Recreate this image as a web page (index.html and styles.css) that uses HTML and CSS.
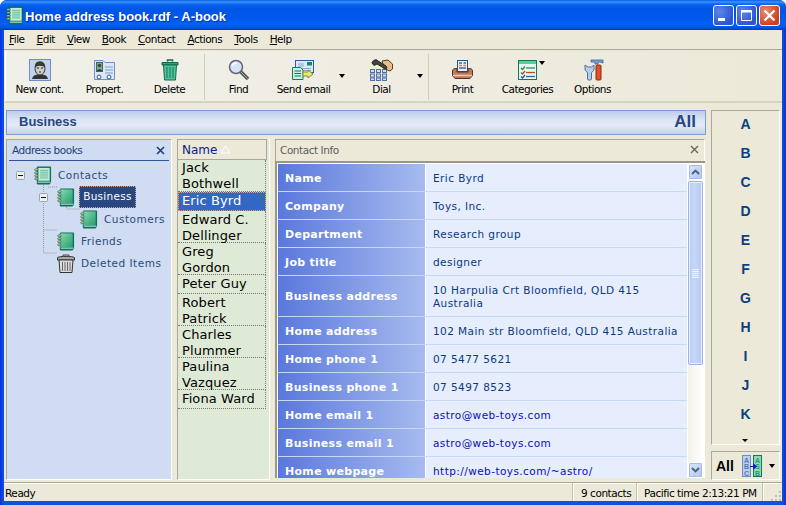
FILE: index.html
```html
<!DOCTYPE html>
<html lang="en">
<head>
<meta charset="utf-8">
<title>Home address book.rdf - A-book</title>
<link rel="stylesheet" href="styles.css">
</head>
<body>
<svg class="defs" width="0" height="0" aria-hidden="true">
  <defs>
    <linearGradient id="gb" x1="0" y1="0" x2="1" y2="1"><stop offset="0" stop-color="#8fd8b4"/><stop offset=".55" stop-color="#4fb98c"/><stop offset="1" stop-color="#2c9a70"/></linearGradient>
    <symbol id="book" viewBox="0 0 19 19">
      <path d="M3.5 .5H17.5V15.5L16.5 18.5H3.5Z" fill="#0b7c60" stroke="#0a6a52"/>
      <rect x="3.5" y="1" width="13" height="14.5" fill="url(#gb)"/>
      <path d="M4 16.5H17" stroke="#d8efe4"/>
      <g fill="#e8e48a" stroke="#14584a" stroke-width=".7"><rect x=".8" y="2.5" width="3.6" height="1.8" rx=".8"/><rect x=".8" y="5.7" width="3.6" height="1.8" rx=".8"/><rect x=".8" y="8.9" width="3.6" height="1.8" rx=".8"/><rect x=".8" y="12.1" width="3.6" height="1.8" rx=".8"/></g>
    </symbol>
    <symbol id="bookp" viewBox="0 0 19 19">
      <path d="M3.5 .5H17.5V15.5L16.5 18.5H3.5Z" fill="#0b7c60" stroke="#0a6a52"/>
      <rect x="4.5" y="1.5" width="12" height="13.5" fill="#c5ecd8"/>
      <path d="M6.5 4H15M6.5 6H15M6.5 8H15M6.5 10H15M6.5 12H15" stroke="#5fb896"/>
      <path d="M4 16.5H17" stroke="#d8efe4"/>
      <g fill="#e8e48a" stroke="#14584a" stroke-width=".7"><rect x=".8" y="2.5" width="3.6" height="1.8" rx=".8"/><rect x=".8" y="5.7" width="3.6" height="1.8" rx=".8"/><rect x=".8" y="8.9" width="3.6" height="1.8" rx=".8"/><rect x=".8" y="12.1" width="3.6" height="1.8" rx=".8"/></g>
    </symbol>
    <symbol id="minus" viewBox="0 0 9 9">
      <rect x=".5" y=".5" width="8" height="8" rx="1" fill="#f1efe4" stroke="#8fa4bd"/>
      <path d="M2 4.5H7" stroke="#111"/>
    </symbol>
    <symbol id="chev" viewBox="0 0 9 6">
      <path d="M1 5L4.5 1.6L8 5" fill="none" stroke="#4d6185" stroke-width="2"/>
    </symbol>
  </defs>
</svg>
<div class="window">
  <header class="titlebar">
    <svg class="title-icon" width="18" height="19"><use href="#bookp"/></svg>
    <span class="title-text">Home address book.rdf - A-book</span>
    <div class="winbtns">
      <span class="winbtn"><svg width="21" height="21" viewBox="0 0 21 21"><rect x="5" y="13" width="7" height="3" fill="#fff"/></svg></span>
      <span class="winbtn"><svg width="21" height="21" viewBox="0 0 21 21"><path d="M5.5 5.5H15.5V15.5H5.5Z" fill="none" stroke="#fff"/><path d="M5 6.5H16" stroke="#fff" stroke-width="2"/></svg></span>
      <span class="winbtn close"><svg width="21" height="21" viewBox="0 0 21 21"><path d="M5.5 5.5L15.5 15.5M15.5 5.5L5.5 15.5" stroke="#fff" stroke-width="2.2"/></svg></span>
    </div>
  </header>
  <div class="frame">
    <nav class="menu">
      <span><u>F</u>ile</span><span><u>E</u>dit</span><span><u>V</u>iew</span><span><u>B</u>ook</span><span><u>C</u>ontact</span><span><u>A</u>ctions</span><span><u>T</u>ools</span><span><u>H</u>elp</span>
    </nav>
    <div class="toolbar">
      <div class="tool">
        <svg width="22" height="22" viewBox="0 0 22 22"><rect x=".5" y=".5" width="21" height="21" fill="#c3d3ee" stroke="#6f8fc4"/><path d="M3 20C4 16 7 15.5 11 15.5S18 16 19 20Z" fill="#333"/><ellipse cx="11" cy="9.5" rx="5" ry="6.5" fill="#cfcfc8" stroke="#333"/><path d="M6 9C5.5 3.5 8 2.5 11 2.5S16.5 4 16 9C14.5 6.5 8 5.5 6 9Z" fill="#3a3a3a"/><path d="M8 9H10M12 9H14M10 13H12" stroke="#222"/></svg>
        <span>New cont.</span>
      </div>
      <div class="tool">
        <svg width="24" height="22" viewBox="0 0 24 22"><path d="M1.5 1.5H10L12 3.5H21.5V20.5H1.5Z" fill="#dde8f6" stroke="#6f92c6"/><rect x="3.5" y="3.5" width="6" height="9" fill="#7fae90" stroke="#3a6a58"/><circle cx="6.5" cy="6.5" r="1.8" fill="#444"/><path d="M4 12C4.5 9.5 8.5 9.5 9 12Z" fill="#333"/><path d="M12 8H20M12 11H20M12 14H20" stroke="#7d9dd0"/><circle cx="6" cy="18" r="2" fill="#fff" stroke="#2e5da8"/><circle cx="16" cy="18" r="2" fill="#fff" stroke="#2e5da8"/></svg>
        <span>Propert.</span>
      </div>
      <div class="tool">
        <svg width="18" height="22" viewBox="0 0 18 22"><path d="M6.5 2.500V1H11.5V2.500" fill="none" stroke="#0c6d55" stroke-width="1.500"/><path d="M1 3.500H17V6H1Z" fill="#2fa37a" stroke="#0d6b53"/><path d="M2.500 6H15.500L14.500 21H3.500Z" fill="#53c197" stroke="#0d6b53"/><path d="M6 8V19M9 8V19M12 8V19" stroke="#0f7d60"/></svg>
        <span>Delete</span>
      </div>
      <i class="tsep"></i>
      <div class="tool">
        <svg width="22" height="22" viewBox="0 0 22 22"><path d="M12 12L20 20" stroke="#555" stroke-width="3.500"/><path d="M13 13L19.500 19.500" stroke="#aaa" stroke-width="1"/><circle cx="8" cy="8" r="6.500" fill="#d5e4f8" stroke="#667" stroke-width="1.500"/><path d="M4 7C5 4.500 7 4 9 4" fill="none" stroke="#fff" stroke-width="1.500"/></svg>
        <span>Find</span>
      </div>
      <div class="tool tool-send">
        <svg width="23" height="20" viewBox="0 0 23 20"><rect x="3.500" y=".5" width="18" height="12" fill="#dce8f8" stroke="#2f5b9e"/><rect x="15" y="2" width="5" height="3.500" fill="#0f8a68"/><path d="M6 4H12M6 6H12M9 8.500H19M9 10.500H19" stroke="#8aa6d4"/><path d="M.5 7.500H8.500L11 10V19.500H.5Z" fill="#cdeee0" stroke="#0f7d60"/><path d="M2.500 11H9M2.500 13.500H9M2.500 16H9" stroke="#0f7d60"/><path d="M11 12H16V10L21 14L16 18V16H11Z" fill="#f0ea6a" stroke="#7f8f3a"/></svg>
        <span>Send email</span>
        <b class="drop"></b>
      </div>
      <div class="tool tool-dial">
        <svg width="23" height="22" viewBox="0 0 23 22"><g fill="#d2deef" stroke="#4f6fa8"><rect x=".5" y="10.500" width="4" height="3"/><rect x="6.500" y="10.500" width="4" height="3"/><rect x="12.500" y="10.500" width="4" height="3"/><rect x=".5" y="15" width="4" height="3"/><rect x="6.500" y="15" width="4" height="3"/><rect x="12.500" y="15" width="4" height="3"/><rect x=".5" y="19" width="4" height="2.500"/><rect x="6.500" y="19" width="4" height="2.500"/><rect x="12.500" y="19" width="4" height="2.500"/></g><path d="M12 2L18 1L22.500 5V10L20 12L15 10Z" fill="#e8bd8a" stroke="#5a3a20"/><path d="M2 4C3 .5 7 0 8 2L16 7L17 9C15 11 13 9 12 8L7 5L4 6.500Z" fill="#444" stroke="#222"/></svg>
        <span>Dial</span>
        <b class="drop"></b>
      </div>
      <i class="tsep"></i>
      <div class="tool">
        <svg width="21" height="20" viewBox="0 0 21 20"><rect x="5.500" y=".5" width="10" height="11" fill="#e8f0fa" stroke="#2f4f8a"/><path d="M7 3H10M11.500 3H14" stroke="#0f8a68" stroke-width="1.500"/><path d="M7 5.500H10M11.500 5.500H14" stroke="#d8882a" stroke-width="1.500"/><path d="M7 8H14" stroke="#3a6ac0" stroke-width="1.500"/><path d="M.5 11C.5 9 2 8.500 5 8.500V12H16V8.500C19 8.500 20.500 9 20.500 11V15.500L18 18.500H3L.5 15.500Z" fill="#b97a5c" stroke="#5a3326"/><path d="M1 15.500H20" stroke="#e8c8b4" stroke-width="1.500"/></svg>
        <span>Print</span>
      </div>
      <div class="tool">
        <svg width="19" height="20" viewBox="0 0 19 20"><rect x=".5" y=".5" width="18" height="19" fill="#e9f7f0" stroke="#0d7a60"/><rect x="1" y="1" width="17" height="3" fill="#55d09c"/><path d="M3 8L4.500 9.500L7 6.500" fill="none" stroke="#1f8f3f" stroke-width="1.300"/><path d="M3 12.500L4.500 14L7 11" fill="none" stroke="#c04020" stroke-width="1.300"/><path d="M3 16.500L4.500 18L7 15" fill="none" stroke="#2050b0" stroke-width="1.300"/><path d="M8 8H17" stroke="#2a9060" stroke-width="1.300"/><path d="M8 12.500H17" stroke="#c04830" stroke-width="1.300"/><path d="M8 16.500H17" stroke="#3a60b0" stroke-width="1.300"/></svg>
        <span>Categories</span>
        <b class="drop drop-top"></b>
      </div>
      <div class="tool">
        <svg width="22" height="22" viewBox="0 0 22 22"><path d="M9 1H21V4L18 3H16V5H13V3H9Z" fill="#7fa8d8" stroke="#2f5b9e" stroke-width=".8"/><rect x="14" y="6" width="5" height="15" rx="1" fill="#e2502a" stroke="#8a2a10"/><path d="M3 6V10C3 12 5 13 5.500 13.500V20C5.500 21.500 9.500 21.500 9.500 20V13.500C10 13 12 12 12 10V6L9.500 8H6Z" fill="#b5cdea" stroke="#4a70a8"/></svg>
        <span>Options</span>
      </div>
    </div>
    <div class="main">
      <div class="workspace">
        <div class="banner"><span>Business</span><span class="banner-all">All</span></div>
        <div class="panes">
          <aside class="books">
            <div class="books-head"><span>Address books</span><svg width="9" height="9" viewBox="0 0 9 9"><path d="M1 1L8 8M8 1L1 8" stroke="#1f3f78" stroke-width="1.600"/></svg></div>
            <div class="tree">
              <svg class="tree-lines" width="100" height="120"><path d="M43.500 16V92M43.500 69H57M43.500 92H57M48 26H57M66.500 36V48H80" fill="none" stroke="#999" stroke-dasharray="1 1"/></svg>
              <div class="node n0"><svg class="exp" width="9" height="9"><use href="#minus"/></svg><svg class="bk" width="18" height="19"><use href="#bookp"/></svg><span>Contacts</span></div>
              <div class="node n1"><svg class="exp" width="9" height="9"><use href="#minus"/></svg><svg class="bk" width="18" height="19"><use href="#book"/></svg><span class="sel">Business</span></div>
              <div class="node n2"><svg class="bk" width="18" height="19"><use href="#book"/></svg><span>Customers</span></div>
              <div class="node n3"><svg class="bk" width="18" height="19"><use href="#book"/></svg><span>Friends</span></div>
              <div class="node n3"><svg class="bk" width="18" height="19" viewBox="0 0 18 19"><path d="M6 2.500V1H12V2.500" fill="none" stroke="#444"/><path d="M.5 3.500C3 2 15 2 17.500 3.500V6H.5Z" fill="#aaa" stroke="#333"/><path d="M2 6H16L15 18.500H3Z" fill="#ddd" stroke="#333"/><path d="M5.500 8V17M8 8V17M10.500 8V17M13 8V17" stroke="#666"/></svg><span>Deleted Items</span></div>
            </div>
          </aside>
          <section class="names">
            <div class="names-head">Name <svg width="11" height="9" viewBox="0 0 11 9"><path d="M5.500 1L10 8H1Z" fill="none" stroke="#fff"/></svg></div>
            <div class="names-list">
              <div class="nm two first">Jack Bothwell</div>
              <div class="nm one sel">Eric Byrd</div>
              <div class="nm two">Edward C. Dellinger</div>
              <div class="nm two">Greg Gordon</div>
              <div class="nm one">Peter Guy</div>
              <div class="nm two">Robert Patrick</div>
              <div class="nm two">Charles Plummer</div>
              <div class="nm two">Paulina Vazquez</div>
              <div class="nm one">Fiona Ward</div>
            </div>
          </section>
          <section class="info">
            <div class="info-head"><span>Contact Info</span><svg width="9" height="9" viewBox="0 0 9 9"><path d="M1 1L8 8M8 1L1 8" stroke="#666" stroke-width="1.400"/></svg></div>
            <div class="info-body">
              <div class="fields">
                <div class="row"><div class="k">Name</div><div class="v">Eric Byrd</div></div>
                <div class="row"><div class="k">Company</div><div class="v">Toys, Inc.</div></div>
                <div class="row"><div class="k">Department</div><div class="v">Research group</div></div>
                <div class="row"><div class="k">Job title</div><div class="v">designer</div></div>
                <div class="row tall"><div class="k">Business address</div><div class="v">10 Harpulia Crt Bloomfield, QLD 415<br>Australia</div></div>
                <div class="row"><div class="k">Home address</div><div class="v">102 Main str Bloomfield, QLD 415 Australia</div></div>
                <div class="row"><div class="k">Home phone 1</div><div class="v">07 5477 5621</div></div>
                <div class="row"><div class="k">Business phone 1</div><div class="v">07 5497 8523</div></div>
                <div class="row"><div class="k">Home email 1</div><div class="v link">astro@web-toys.com</div></div>
                <div class="row"><div class="k">Business email 1</div><div class="v link">astro@web-toys.com</div></div>
                <div class="row"><div class="k">Home webpage</div><div class="v link">http://web-toys.com/~astro/</div></div>
              </div>
              <div class="scroll">
                <span class="sbtn"><svg width="9" height="6"><use href="#chev"/></svg></span>
                <div class="track">
                  <div class="thumb"><svg width="7" height="9" viewBox="0 0 7 9"><path d="M0 .5H7M0 2.500H7M0 4.500H7M0 6.500H7M0 8.500H7" stroke="#eef3ff"/></svg></div>
                </div>
                <span class="sbtn down"><svg width="9" height="6"><use href="#chev"/></svg></span>
              </div>
            </div>
          </section>
        </div>
      </div>
      <aside class="rail">
        <div class="letters">
          <span>A</span><span>B</span><span>C</span><span>D</span><span>E</span><span>F</span><span>G</span><span>H</span><span>I</span><span>J</span><span>K</span>
          <b class="more"></b>
        </div>
        <div class="rail-foot">
          <strong>All</strong>
          <svg width="20" height="22" viewBox="0 0 20 22"><rect x=".5" y=".5" width="8" height="21" fill="#b9cdec" stroke="#6f8fc4"/><rect x="11.500" y=".5" width="8" height="21" fill="#8fd8b4" stroke="#0d7a60"/><text x="4.500" y="7.500" class="ic">A</text><text x="4.500" y="14" class="ic">B</text><text x="4.500" y="20.500" class="ic">C</text><text x="15.500" y="7.500" class="ic g">A</text><text x="15.500" y="14" class="ic g">S</text><text x="15.500" y="20.500" class="ic g">B</text><path d="M8 11H11V8L15 11.500L11 15V12H8Z" fill="#0a1ae0"/></svg>
          <b class="foot-drop"></b>
        </div>
      </aside>
    </div>
    <footer class="status">
      <span class="st-ready">Ready</span>
      <span class="st-cell st-count">9 contacts</span>
      <span class="st-cell st-time">Pacific time 2:13:21 PM</span>
      <span class="st-cell st-grip"><svg width="10" height="10" viewBox="0 0 10 10"><path d="M8 0h2v2H8zM4 4h2v2H4zM8 4h2v2H8zM0 8h2v2H0zM4 8h2v2H4zM8 8h2v2H8z" fill="#c4c1ae"/></svg></span>
    </footer>
  </div>
</div>
</body>
</html>
```
FILE: styles.css
```css
* { box-sizing: border-box; }
html, body { margin: 0; padding: 0; width: 786px; height: 505px; overflow: hidden; background: #fff; }
body { font-family: "DejaVu Sans", sans-serif; font-size: 10.5px; color: #000; }
.defs { display: block; height: 0; }
svg { display: block; flex: none; }

.window { width: 786px; height: 505px; display: flex; flex-direction: column; background: linear-gradient(90deg, #0831d9 0, #0a4be8 3px, #0855dd 4px, #0855dd 782px, #0831d9 786px); border-radius: 7px 7px 0 0; overflow: hidden; }

.titlebar { height: 30px; flex: none; display: flex; align-items: center; padding: 0 5px 0 6px; background: linear-gradient(180deg, #0a5ce0 0, #3d95ff 2px, #0a66f0 4px, #0055e5 9px, #0058ee 18px, #0062f8 24px, #0052e0 28px, #0039c0 30px); }
.title-icon { margin-right: 1px; }
.title-text { color: #fff; font: bold 13px "Liberation Sans", sans-serif; text-shadow: 1px 1px 1px #0a2fa0; padding-top: 2px; }
.winbtns { margin-left: auto; display: flex; gap: 2px; margin-right: 1px; }
.winbtn { width: 21px; height: 21px; border-radius: 3px; border: 1px solid #fff; background: radial-gradient(circle at 30% 30%, #5c86ea, #2a55d4 75%); display: flex; align-items: center; justify-content: center; }
.winbtn.close { background: radial-gradient(circle at 30% 30%, #e88a6e, #cf3f1c 75%); }

.frame { flex: 1; min-height: 0; margin: 0 4px 4px; background: #ece9d8; display: flex; flex-direction: column; }

.menu { height: 20px; flex: none; display: flex; align-items: center; padding: 0 0 1px 5px; gap: 12px; border-bottom: 1px solid #aca899; }
.menu span { letter-spacing: -.5px; }

.toolbar { height: 52px; flex: none; display: flex; align-items: flex-start; padding: 0 0 0 2px; margin: 1px 0 0 1px; background: linear-gradient(90deg, #f1f0e8, #efede2 50%, #ece9d8); border-bottom: 2px solid #d6d3c2; box-shadow: inset 1px 0 #fff; }
.tool { position: relative; width: 65px; height: 50px; display: flex; flex-direction: column; align-items: center; padding-top: 7px; }
.tool svg { height: 24px; }
.tool span { position: absolute; top: 32px; left: 0; right: 0; text-align: center; letter-spacing: -.5px; white-space: nowrap; }
.tool-send { margin-right: 13px; }
.tool-dial { margin-right: 12px; }
.tsep { width: 1px; height: 46px; margin: 3px 1px 0 2px; background: #d0cdbc; flex: none; }
.drop { position: absolute; right: -9px; top: 23px; width: 0; height: 0; border: 3.5px solid transparent; border-top: 4px solid #000; border-bottom: 0; }
.tool .drop-top { right: 15px; top: 10px; }

.main { flex: 1; min-height: 0; display: flex; padding: 6px 2px 2px 2px; gap: 5px; }
.workspace { width: 700px; flex: none; display: flex; flex-direction: column; gap: 4px; margin-top: 1px; }
.banner { height: 25px; flex: none; display: flex; justify-content: space-between; align-items: center; padding: 0 9px 2px 12px; border: 1px solid #7b9cd6; background: linear-gradient(180deg, #bccdec 0, #d9e2f4 35%, #e4eaf7 60%, #c4d2ed 100%); font: bold 13px "Liberation Sans", sans-serif; color: #27477f; }
.banner-all { font-size: 17px; }

.panes { flex: 1; min-height: 0; display: flex; gap: 5px; }

.books { width: 166px; flex: none; background: #cfdcf1; border-top: 1px solid #aca899; border-left: 1px solid #aca899; border-right: 1px solid #fff; border-bottom: 1px solid #fff; display: flex; flex-direction: column; }
.books-head { height: 21px; flex: none; margin: 0 2px; padding: 0 4px 0 3px; display: flex; align-items: center; justify-content: space-between; border-bottom: 1px solid #2f5596; color: #1f3f78; letter-spacing: -.45px; }
.tree { position: relative; flex: 1; padding-top: 3px; color: #2c4a80; }
.tree-lines { position: absolute; left: -7px; top: 0; }
.node { position: relative; height: 22px; display: flex; align-items: center; letter-spacing: .5px; }
.node .bk { margin-right: 6px; }
.node .exp { margin-right: 9px; }
.n0 { padding-left: 9px; }
.n1 { padding-left: 32px; }
.n2 { padding-left: 73px; }
.n3 { padding-left: 50px; }
.n1 .bk { margin-right: 4px; }
.node .sel { background: #27477f; color: #fff; height: 22px; line-height: 21px; width: 57px; letter-spacing: .3px; outline: 1px dotted #e9a070; outline-offset: -1px; text-align: center; }

.names { width: 93px; flex: none; background: #dfead6; border-left: 1px solid #aca899; border-bottom: 1px solid #fff; border-right: 1px solid #fff; display: flex; flex-direction: column; }
.names-head { height: 21px; flex: none; width: 89px; display: flex; align-items: center; gap: 3px; padding-left: 4px; background: #ece9d8; border: 1px solid #aca899; border-left: 0; font-size: 12px; color: #0a1e80; }
.names-list { flex: 1; font-size: 13px; letter-spacing: .1px; line-height: 16px; }
.nm { width: 88px; padding: 1px 4px 0; border-right: 1px dotted #777; border-bottom: 1px dotted #777; }
.nm.one { height: 19px; }
.nm.two { height: 32px; }
.nm.first { padding-top: 0; }
.nm.sel { background: #3268c4; color: #fff; outline: 1px dotted #e9a070; outline-offset: -1px; border-bottom: 0; border-right: 0; }

.info { flex: 1; min-width: 0; display: flex; flex-direction: column; margin-right: 1px; }
.info-head { height: 22px; flex: none; display: flex; align-items: center; justify-content: space-between; padding: 0 5px 2px 4px; border: 1px solid #aca899; border-bottom: 0; border-right-color: #fff; color: #5e5e5e; letter-spacing: -.45px; }
.info-body { flex: 1; min-height: 0; display: flex; margin: 0 0 2px 0; border-top: 2px solid #9a988a; border-left: 2px solid #9a988a; background: #fff; padding: 1px 2px 0 1px; }
.fields { flex: 1; min-width: 0; overflow: hidden; background: #e6edfd; }
.row { display: flex; height: 28px; border-bottom: 1px solid #c9d7f6; }
.row.tall { height: 41px; }
.k { width: 148px; flex: none; display: flex; align-items: center; padding: 1px 0 0 7px; color: #fff; font-size: 11px; font-weight: bold; letter-spacing: .3px; background: linear-gradient(90deg, #5a78dc, #a7bbef); border-right: 1px solid #fff; }
.v { flex: 1; padding-left: 7px; padding-top: 1px; display: flex; align-items: center; color: #0a3a80; letter-spacing: .43px; line-height: 13px; white-space: nowrap; }
.v.link { color: #0a10b8; }

.scroll { width: 15px; flex: none; display: flex; flex-direction: column; margin-left: 1px; background: linear-gradient(90deg, #f3f1ea, #fff); }
.sbtn { height: 16px; flex: none; display: flex; align-items: center; justify-content: center; background: linear-gradient(135deg, #dce6fb, #b0c4f2); border: 1px solid #fff; border-radius: 2px; outline: 1px solid #a9bce6; outline-offset: -2px; }
.sbtn.down svg { transform: scaleY(-1); }
.track { flex: 1; min-height: 0; padding-top: 1px; }
.thumb { height: 184px; display: flex; align-items: center; justify-content: center; background: linear-gradient(90deg, #b6c9f4, #c8d7f8 40%, #b4c8f3); border: 1px solid #9fb5e6; border-radius: 2px; box-shadow: inset 0 0 0 1px #e8eefc; }

.rail { width: 69px; flex: none; display: flex; flex-direction: column; gap: 6px; margin-top: 1px; }
.letters { position: relative; flex: 1; display: flex; flex-direction: column; align-items: center; border-top: 1px solid #aca899; border-left: 1px solid #aca899; border-right: 1px solid #fff; border-bottom: 1px solid #fff; padding-top: 5px; color: #0a3f80; font: bold 14px "Liberation Sans", sans-serif; }
.letters span { height: 29px; line-height: 17px; }
.more { position: absolute; left: 30px; bottom: 2px; border: 3px solid transparent; border-top: 3px solid #000; border-bottom: 0; }
.rail-foot { height: 29px; flex: none; display: flex; align-items: center; padding-left: 4px; border-top: 1px solid #aca899; border-left: 1px solid #aca899; border-right: 1px solid #fff; border-bottom: 1px solid #fff; }
.rail-foot strong { font: bold 14px "Liberation Sans", sans-serif; margin-right: 8px; }
.foot-drop { margin-left: 7px; border: 3px solid transparent; border-top: 4px solid #000; border-bottom: 0; }
.ic { font: bold 7px "Liberation Sans", sans-serif; fill: #5578b8; text-anchor: middle; }
.ic.g { fill: #2d9a70; }

.status { height: 19px; flex: none; display: flex; align-items: center; border-top: 1px solid #aca899; box-shadow: inset 0 1px #fff; letter-spacing: -.45px; white-space: nowrap; }
.st-ready { width: 568px; padding: 1px 0 0 1px; flex: none; }
.st-cell { height: 100%; padding-top: 1px; display: flex; align-items: center; border-left: 1px solid #c4c1ae; box-shadow: inset 1px 0 #fff; flex: none; }
.st-count { width: 64px; padding-left: 8px; }
.st-time { width: 126px; padding-left: 7px; }
.st-grip { flex: 1; justify-content: flex-end; padding-right: 1px; align-items: flex-end; }
```
